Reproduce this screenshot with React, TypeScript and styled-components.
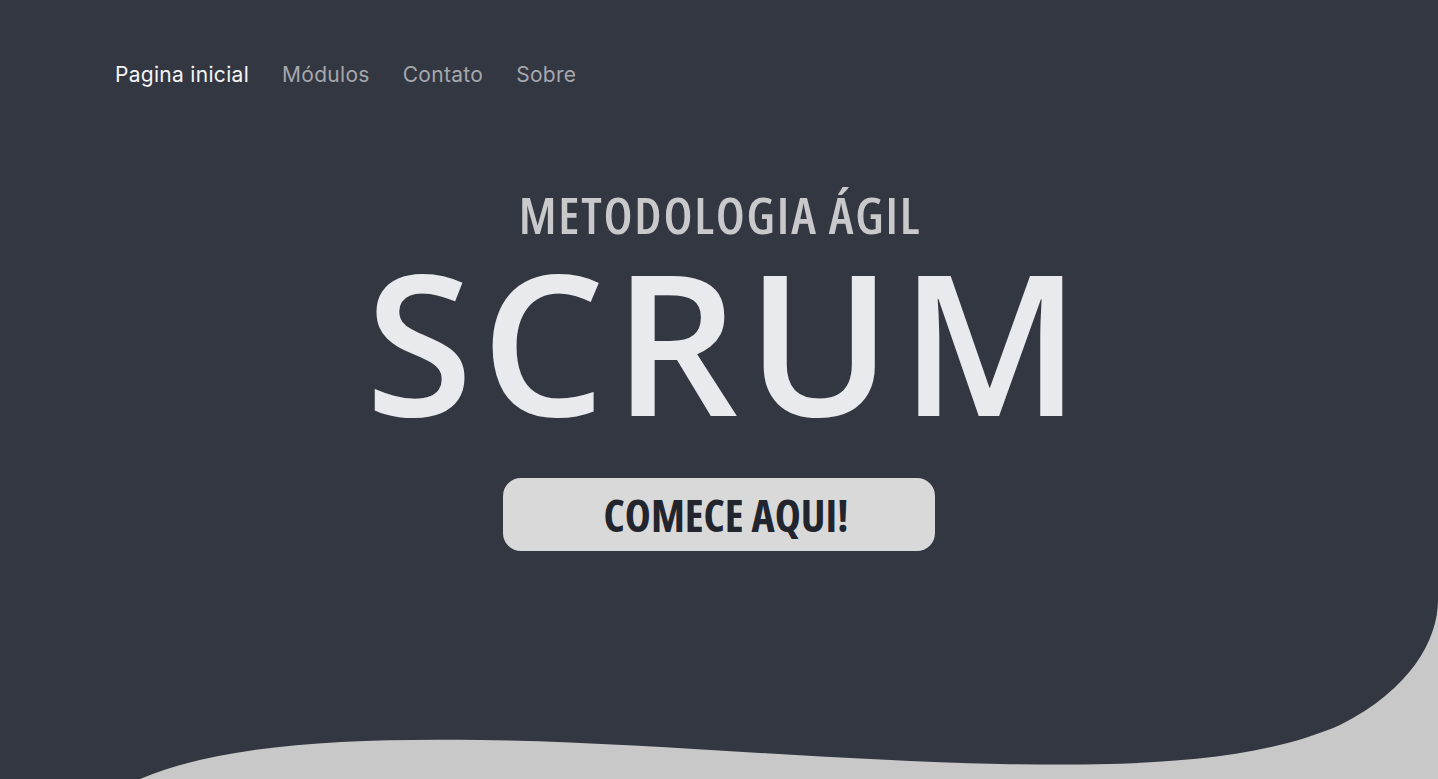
import styled, { createGlobalStyle } from "styled-components";

const GlobalStyle = createGlobalStyle`
  * {
    box-sizing: border-box;
  }

  html,
  body {
    margin: 0;
    padding: 0;
    background: #333741;
  }
`;

const Hero = styled.section`
  position: relative;
  min-height: 779px;
  overflow: hidden;
  background: #333741;
  display: flex;
  flex-direction: column;
`;

const Nav = styled.nav`
  display: flex;
  align-items: center;
  gap: 33px;
  padding: 61px 115px 0;
`;

const NavLink = styled.a<{ $active?: boolean }>`
  font-family: "Inter", "Open Sans", sans-serif;
  font-size: 21px;
  font-weight: 400;
  line-height: 28px;
  letter-spacing: 0.3px;
  text-decoration: none;
  color: ${({ $active }) => ($active ? "#f4f4f6" : "#a5a7ad")};
  cursor: pointer;
`;

const Content = styled.div`
  display: flex;
  flex-direction: column;
  align-items: center;
  padding-top: 95px;
  position: relative;
  z-index: 1;
`;

const Kicker = styled.h2`
  margin: 0;
  padding-left: 2px;
  font-family: "Open Sans", sans-serif;
  font-stretch: 75%;
  font-weight: 600;
  font-size: 51px;
  line-height: 60px;
  letter-spacing: 1.8px;
  color: #c9c9cb;
`;

const Title = styled.h1`
  margin: 0;
  padding-left: 16px;
  font-family: "Open Sans", sans-serif;
  font-stretch: 100%;
  font-weight: 600;
  font-size: 196px;
  line-height: 192px;
  letter-spacing: 8px;
  color: #e9eaee;
`;

const StartButton = styled.button`
  margin-top: 42px;
  width: 432px;
  height: 73px;
  border: none;
  border-radius: 18px;
  background: #d9d9d9;
  font-family: "Open Sans", sans-serif;
  font-stretch: 75%;
  font-weight: 700;
  font-size: 44px;
  line-height: 1;
  color: #22252e;
  padding-left: 20px;
  cursor: pointer;
`;

const Wave = styled.svg`
  position: absolute;
  left: 0;
  bottom: 0;
  width: 100%;
  height: 179px;
  display: block;
`;

const links = ["Pagina inicial", "Módulos", "Contato", "Sobre"];

export default function App() {
  return (
    <>
      <GlobalStyle />
      <Hero>
        <Nav>
          {links.map((label, i) => (
            <NavLink key={label} $active={i === 0}>
              {label}
            </NavLink>
          ))}
        </Nav>
        <Content>
          <Kicker>METODOLOGIA ÁGIL</Kicker>
          <Title>SCRUM</Title>
          <StartButton>COMECE AQUI!</StartButton>
        </Content>
        <Wave viewBox="0 600 1438 179" preserveAspectRatio="none">
          <path
            d="M140 779 C220 745 340 738 480 740 C640 742 820 760 1000 764 C1150 767 1260 760 1340 725 C1410 690 1438 640 1438 600 L1438 779 Z"
            fill="#c8c8c8"
          />
        </Wave>
      </Hero>
    </>
  );
}
